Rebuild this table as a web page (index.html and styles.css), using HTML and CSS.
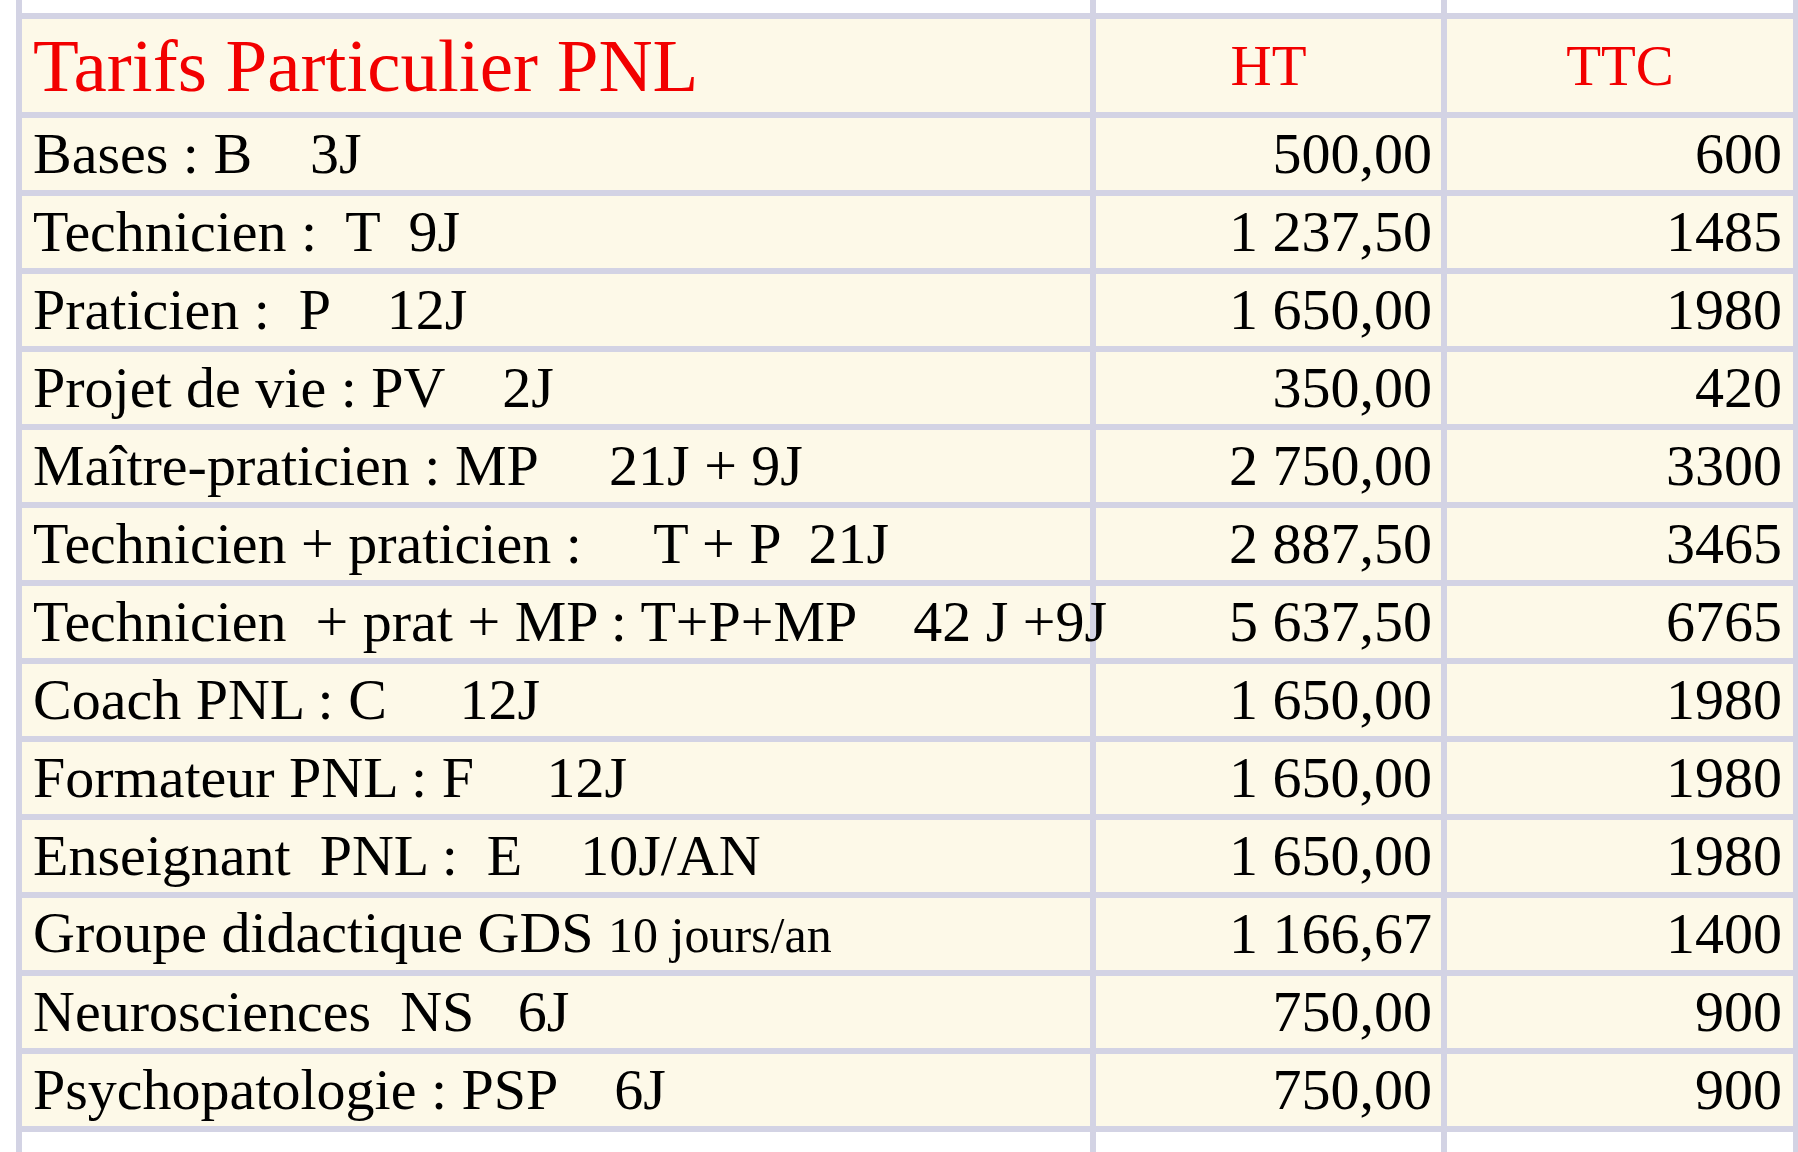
FILE: index.html
```html
<!DOCTYPE html>
<html lang="fr">
<head>
<meta charset="utf-8">
<title>Tarifs Particulier PNL</title>
<link rel="stylesheet" href="styles.css">
</head>
<body>
<table class="tarifs">
  <colgroup>
    <col class="c-label">
    <col class="c-ht">
    <col class="c-ttc">
  </colgroup>
  <tbody>
    <tr class="row-blank-top"><td></td><td></td><td></td></tr>
    <tr class="row-head">
      <td class="label title">Tarifs Particulier PNL</td>
      <td class="head">HT</td>
      <td class="head">TTC</td>
    </tr>
    <tr class="row"><td class="label">Bases : B    3J</td><td class="ht">500,00</td><td class="ttc">600</td></tr>
    <tr class="row"><td class="label">Technicien :  T  9J</td><td class="ht">1 237,50</td><td class="ttc">1485</td></tr>
    <tr class="row"><td class="label">Praticien :  P    12J</td><td class="ht">1 650,00</td><td class="ttc">1980</td></tr>
    <tr class="row"><td class="label">Projet de vie : PV    2J</td><td class="ht">350,00</td><td class="ttc">420</td></tr>
    <tr class="row"><td class="label">Maître-praticien : MP     21J + 9J</td><td class="ht">2 750,00</td><td class="ttc">3300</td></tr>
    <tr class="row"><td class="label">Technicien + praticien :     T + P  21J</td><td class="ht">2 887,50</td><td class="ttc">3465</td></tr>
    <tr class="row"><td class="label">Technicien  + prat + MP : T+P+MP    42 J +9J</td><td class="ht">5 637,50</td><td class="ttc">6765</td></tr>
    <tr class="row"><td class="label">Coach PNL : C     12J</td><td class="ht">1 650,00</td><td class="ttc">1980</td></tr>
    <tr class="row"><td class="label">Formateur PNL : F     12J</td><td class="ht">1 650,00</td><td class="ttc">1980</td></tr>
    <tr class="row"><td class="label">Enseignant  PNL :  E    10J/AN</td><td class="ht">1 650,00</td><td class="ttc">1980</td></tr>
    <tr class="row"><td class="label">Groupe didactique GDS <span class="small">10 jours/an</span></td><td class="ht">1 166,67</td><td class="ttc">1400</td></tr>
    <tr class="row"><td class="label">Neurosciences  NS   6J</td><td class="ht">750,00</td><td class="ttc">900</td></tr>
    <tr class="row"><td class="label">Psychopatologie : PSP    6J</td><td class="ht">750,00</td><td class="ttc">900</td></tr>
    <tr class="row-blank-bottom"><td></td><td></td><td></td></tr>
  </tbody>
</table>
</body>
</html>
```
FILE: styles.css
```css
html, body {
  margin: 0;
  padding: 0;
  background: #ffffff;
  overflow: hidden;
  height: 100%;
}

.tarifs {
  margin: -6px 0 0 16px;
  width: 1783px;
  table-layout: fixed;
  border-collapse: separate;
  border-spacing: 6px;
  background: #d3d3e4;
  font-family: "Liberation Serif", "Times New Roman", serif;
  color: #000000;
}

.c-label { width: 1068px; }
.c-ht { width: 345px; }
.c-ttc { width: 346px; }

.tarifs td {
  box-sizing: border-box;
  padding: 0;
  background: #fdf9e8;
  white-space: pre;
  overflow: visible;
  vertical-align: middle;
}

.row-blank-top td {
  height: 13px;
  background: #ffffff;
}

.row-blank-bottom td {
  height: 60px;
  background: #ffffff;
}

.row-head td {
  height: 93px;
}

.row td {
  height: 72px;
  font-size: 58px;
  line-height: 66px;
}

.label {
  padding-left: 11px !important;
  text-align: left;
}

.title {
  font-size: 75px;
  line-height: 85px;
  color: #f20000;
}

.head {
  font-size: 57px;
  line-height: 66px;
  color: #f20000;
  text-align: center;
}

.ht {
  text-align: right;
  padding-right: 9px !important;
}

.ttc {
  text-align: right;
  padding-right: 11px !important;
}

.small {
  font-size: 50px;
}
```
